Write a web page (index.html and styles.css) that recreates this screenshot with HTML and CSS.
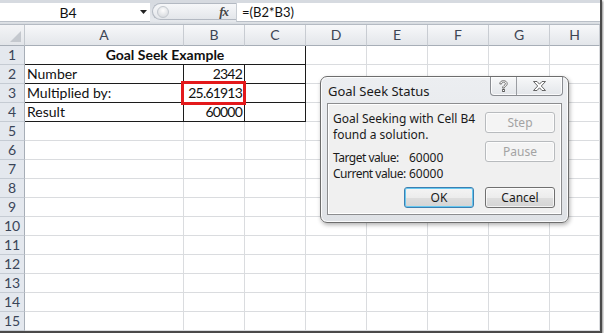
FILE: index.html
```html
<!DOCTYPE html>
<html lang="en">
<head>
  <meta charset="UTF-8">
  <title>Goal Seek Example</title>
  <link rel="stylesheet" href="styles.css">
</head>
<body>
  <div class="excel">
    <!-- Name box + formula bar -->
    <div class="formula-bar">
      <div class="name-box">
        <span class="name">B4</span>
        <svg class="drop" width="7" height="4" viewBox="0 0 7 4"><path d="M0,0 H7 L3.5,4 Z" fill="#222"/></svg>
      </div>
      <div class="fx-pill">
        <span class="knob"></span>
        <span class="fx">fx</span>
      </div>
      <div class="formula">=(B2*B3)</div>
    </div>

    <!-- Sheet grid -->
    <div class="sheet">
      <div class="corner"><span class="tri"></span></div>
      <div class="colhead">A</div><div class="colhead">B</div><div class="colhead">C</div><div class="colhead">D</div>
      <div class="colhead">E</div><div class="colhead">F</div><div class="colhead">G</div><div class="colhead">H</div>

      <div class="rowhead">1</div>
      <div class="cell title tb">Goal Seek Example</div>
      <div class="cell"></div><div class="cell"></div><div class="cell"></div><div class="cell"></div><div class="cell"></div>

      <div class="rowhead">2</div>
      <div class="cell tb">Number</div><div class="cell tb num">2342</div><div class="cell tb"></div>
      <div class="cell"></div><div class="cell"></div><div class="cell"></div><div class="cell"></div><div class="cell"></div>

      <div class="rowhead">3</div>
      <div class="cell tb">Multiplied by:</div><div class="cell tb num marked">25.61913</div><div class="cell tb"></div>
      <div class="cell"></div><div class="cell"></div><div class="cell"></div><div class="cell"></div><div class="cell"></div>

      <div class="rowhead">4</div>
      <div class="cell tb">Result</div><div class="cell tb num">60000</div><div class="cell tb"></div>
      <div class="cell"></div><div class="cell"></div><div class="cell"></div><div class="cell"></div><div class="cell"></div>

      <div class="rowhead">5</div><div class="cell"></div><div class="cell"></div><div class="cell"></div><div class="cell"></div><div class="cell"></div><div class="cell"></div><div class="cell"></div><div class="cell"></div>
      <div class="rowhead">6</div><div class="cell"></div><div class="cell"></div><div class="cell"></div><div class="cell"></div><div class="cell"></div><div class="cell"></div><div class="cell"></div><div class="cell"></div>
      <div class="rowhead">7</div><div class="cell"></div><div class="cell"></div><div class="cell"></div><div class="cell"></div><div class="cell"></div><div class="cell"></div><div class="cell"></div><div class="cell"></div>
      <div class="rowhead">8</div><div class="cell"></div><div class="cell"></div><div class="cell"></div><div class="cell"></div><div class="cell"></div><div class="cell"></div><div class="cell"></div><div class="cell"></div>
      <div class="rowhead">9</div><div class="cell"></div><div class="cell"></div><div class="cell"></div><div class="cell"></div><div class="cell"></div><div class="cell"></div><div class="cell"></div><div class="cell"></div>
      <div class="rowhead">10</div><div class="cell"></div><div class="cell"></div><div class="cell"></div><div class="cell"></div><div class="cell"></div><div class="cell"></div><div class="cell"></div><div class="cell"></div>
      <div class="rowhead">11</div><div class="cell"></div><div class="cell"></div><div class="cell"></div><div class="cell"></div><div class="cell"></div><div class="cell"></div><div class="cell"></div><div class="cell"></div>
      <div class="rowhead">12</div><div class="cell"></div><div class="cell"></div><div class="cell"></div><div class="cell"></div><div class="cell"></div><div class="cell"></div><div class="cell"></div><div class="cell"></div>
      <div class="rowhead">13</div><div class="cell"></div><div class="cell"></div><div class="cell"></div><div class="cell"></div><div class="cell"></div><div class="cell"></div><div class="cell"></div><div class="cell"></div>
      <div class="rowhead">14</div><div class="cell"></div><div class="cell"></div><div class="cell"></div><div class="cell"></div><div class="cell"></div><div class="cell"></div><div class="cell"></div><div class="cell"></div>
      <div class="rowhead">15</div><div class="cell"></div><div class="cell"></div><div class="cell"></div><div class="cell"></div><div class="cell"></div><div class="cell"></div><div class="cell"></div><div class="cell"></div>
    </div>

    <!-- Goal Seek Status dialog -->
    <div class="dialog">
      <div class="titlebar">
        <span class="caption">Goal Seek Status</span>
        <div class="caption-btns">
          <span class="cbtn help">
            <svg width="9" height="13" viewBox="0 0 9 13">
              <path d="M0.8,4 C0.8,1.7 2.4,0.7 4.5,0.7 C6.7,0.7 8.2,1.9 8.2,3.8 C8.2,5.3 7.2,6 6.1,6.6 C5.5,6.9 5.3,7.3 5.3,8.1 H3.6 C3.6,6.9 4,6.2 4.9,5.6 C5.9,5 6.4,4.6 6.4,3.8 C6.4,2.8 5.6,2.2 4.5,2.2 C3.3,2.2 2.7,2.9 2.6,4 Z" fill="#fff" stroke="#555" stroke-width="0.8" stroke-linejoin="round"/>
              <rect x="3.6" y="9.4" width="1.8" height="2.2" fill="#fff" stroke="#555" stroke-width="0.8"/>
            </svg>
          </span>
          <span class="cbtn close">
            <svg width="13" height="10" viewBox="0 0 13 10">
              <path d="M0.5,0.5 H4 L6.5,3.2 L9,0.5 H12.5 L8.3,5 L12.5,9.5 H9 L6.5,6.8 L4,9.5 H0.5 L4.7,5 Z" fill="#fff" stroke="#555" stroke-width="0.9" stroke-linejoin="round"/>
            </svg>
          </span>
        </div>
      </div>
      <div class="client">
        <div class="top-row">
          <div class="status">
            <p>Goal Seeking with Cell B4<br>found a solution.</p>
            <p class="values">
              <span class="lbl">Target value:</span>60000<br>
              <span class="lbl">Current value:</span>60000
            </p>
          </div>
          <div class="side-btns">
            <button class="btn" disabled>Step</button>
            <button class="btn" disabled>Pause</button>
          </div>
        </div>
        <div class="bottom-row">
          <button class="btn default">OK</button>
          <button class="btn">Cancel</button>
        </div>
      </div>
    </div>
  </div>
</body>
</html>
```

FILE: styles.css
```css
body {
  margin: 0;
  background: #fff;
}
.excel {
  position: relative;
  width: 602px;
  height: 333px;
  box-sizing: border-box;
  border-right: 2px solid #4a4a4a;
  border-bottom: 2px solid #4a4a4a;
  box-shadow: 1px 1px 2px rgba(0,0,0,0.45);
  overflow: hidden;
  font-family: Lato, "Noto Sans", sans-serif;
  font-size: 14px;
  color: #111;
}

/* formula bar */
.formula-bar {
  display: flex;
  height: 25px;
  box-sizing: border-box;
  padding-top: 3px;
  background: linear-gradient(#d6dae0 0, #d6dae0 3px, #e6e9ed 21px, #cfd4da 25px);
  border-bottom: 1px solid #b5bbc3;
}
.name-box {
  display: flex;
  align-items: center;
  width: 150px;
  height: 18px;
  background: #fff;
  border-bottom: 1px solid #b9bfc7;
}
.name {
  width: 136px;
  text-align: center;
}
.drop {
  margin-left: 4px;
}
.fx-pill {
  display: flex;
  align-items: center;
  justify-content: space-between;
  width: 84px;
  height: 17px;
  margin-left: 2px;
  padding: 0 8px 0 4px;
  box-sizing: border-box;
  border: 1px solid #b3b9c2;
  border-right: none;
  border-radius: 9px 0 0 9px;
  background: linear-gradient(#f6f7f9, #e3e6ea);
}
.knob {
  width: 10px;
  height: 10px;
  border-radius: 50%;
  background: radial-gradient(circle at 50% 35%, #fdfdfd, #cfd3d8);
  border: 1px solid #c3c8ce;
}
.fx {
  font-family: "Liberation Serif", serif;
  font-style: italic;
  font-weight: bold;
  font-size: 13px;
  color: #444;
  letter-spacing: -1px;
}
.formula {
  flex: 1;
  height: 18px;
  line-height: 18px;
  padding-left: 5px;
  font-size: 13px;
  background: #fff;
  border-left: 1px solid #c8cdd3;
  border-bottom: 1px solid #b9bfc7;
}

/* sheet */
.sheet {
  display: grid;
  grid-template-columns: 25px 159px 61px 61px 61px 61px 61px 61px 50px;
  grid-template-rows: 21px repeat(15, 19px);
}
.sheet > div {
  box-sizing: border-box;
  border-right: 1px solid #dadcdf;
  border-bottom: 1px solid #dadcdf;
  line-height: 18px;
  white-space: nowrap;
  overflow: hidden;
}
.sheet > .corner {
  position: relative;
  background: linear-gradient(#f3f4f6, #e2e5e9);
  border-right: 1px solid #c3c8ce;
  border-bottom: 1px solid #a7aeb7;
}
.tri {
  position: absolute;
  right: 3px;
  bottom: 3px;
  width: 0;
  height: 0;
  border-left: 11px solid transparent;
  border-bottom: 11px solid #c4c8ce;
}
.sheet > .colhead {
  text-align: center;
  line-height: 20px;
  color: #3d4554;
  background: linear-gradient(#f7f8fa, #e3e6ea);
  border-right: 1px solid #c8ccd2;
  border-bottom: 1px solid #a7aeb7;
}
.sheet > .rowhead {
  text-align: center;
  color: #3a4558;
  background: #e4e8ee;
  border-right: 1px solid #a7aeb7;
  border-bottom: 1px solid #c5cbd3;
}
.sheet > .cell {
  padding: 0 2px;
}
.sheet > .tb {
  border-right-color: #1c1c1c;
  border-bottom-color: #1c1c1c;
}
.title {
  grid-column: span 3;
  text-align: center;
  font-weight: bold;
}
.num {
  text-align: right;
  letter-spacing: -0.8px;
}
.sheet > .marked {
  position: relative;
  overflow: visible;
}
.marked::after {
  content: "";
  position: absolute;
  left: -3px;
  top: -3px;
  right: -2px;
  bottom: -3px;
  border: 3px solid #e3191b;
}

/* dialog */
.dialog {
  position: absolute;
  left: 320px;
  top: 76px;
  width: 249px;
  height: 147px;
  box-sizing: border-box;
  border: 1px solid #6d6d6d;
  border-radius: 7px;
  background: linear-gradient(#eceef1, #dfe2e6);
  box-shadow: inset 0 0 0 1px rgba(255,255,255,0.85), 1px 2px 4px rgba(0,0,0,0.3);
  font-family: "Noto Sans", "Liberation Sans", sans-serif;
  font-size: 12px;
  color: #1a1a1a;
}
.titlebar {
  display: flex;
  align-items: flex-start;
  height: 26px;
  padding-left: 7px;
}
.caption {
  margin-top: 5px;
  font-size: 13px;
}
.caption-btns {
  display: flex;
  margin-left: auto;
  margin-right: 5px;
  height: 18px;
  border: 1px solid #8a8d92;
  border-top: none;
  border-radius: 0 0 4px 4px;
  background: linear-gradient(#f7f8f9, #e3e6ea);
  box-shadow: inset 0 0 0 1px rgba(255,255,255,0.8);
}
.cbtn {
  display: flex;
  align-items: center;
  justify-content: center;
}
.help {
  width: 25px;
  border-right: 1px solid #9a9da2;
}
.close {
  width: 45px;
}
.client {
  display: flex;
  flex-direction: column;
  height: 112px;
  margin: 0 6px;
  box-sizing: border-box;
  padding: 7px 6px 6px 5px;
  border: 1px solid #8c8d8f;
  background: #f0f0f0;
  box-shadow: inset 0 0 0 1px #fff;
}
.top-row {
  display: flex;
  justify-content: space-between;
}
.status p {
  margin: 0;
  line-height: 16px;
  white-space: nowrap;
}
.status .values {
  margin-top: 7px;
}
.lbl {
  display: inline-block;
  width: 76px;
  letter-spacing: -0.5px;
}
.side-btns {
  display: flex;
  flex-direction: column;
  gap: 8px;
  padding-top: 1px;
}
.bottom-row {
  display: flex;
  justify-content: flex-end;
  gap: 11px;
  margin-top: auto;
}
.btn {
  width: 70px;
  height: 21px;
  padding: 0;
  font-family: inherit;
  font-size: 12px;
  color: #1a1a1a;
  border: 1px solid #707070;
  border-radius: 3px;
  background: linear-gradient(#f4f4f4 0, #ececec 50%, #dedede 50%, #d4d4d4 100%);
  box-shadow: inset 0 0 0 1px rgba(255,255,255,0.7);
}
.btn:disabled {
  color: #a3a3a3;
  border-color: #b8bbbe;
  background: #f4f4f4;
}
.btn.default {
  border-color: #3c7fb1;
  box-shadow: inset 0 0 0 1px #66c8f0;
}
```
